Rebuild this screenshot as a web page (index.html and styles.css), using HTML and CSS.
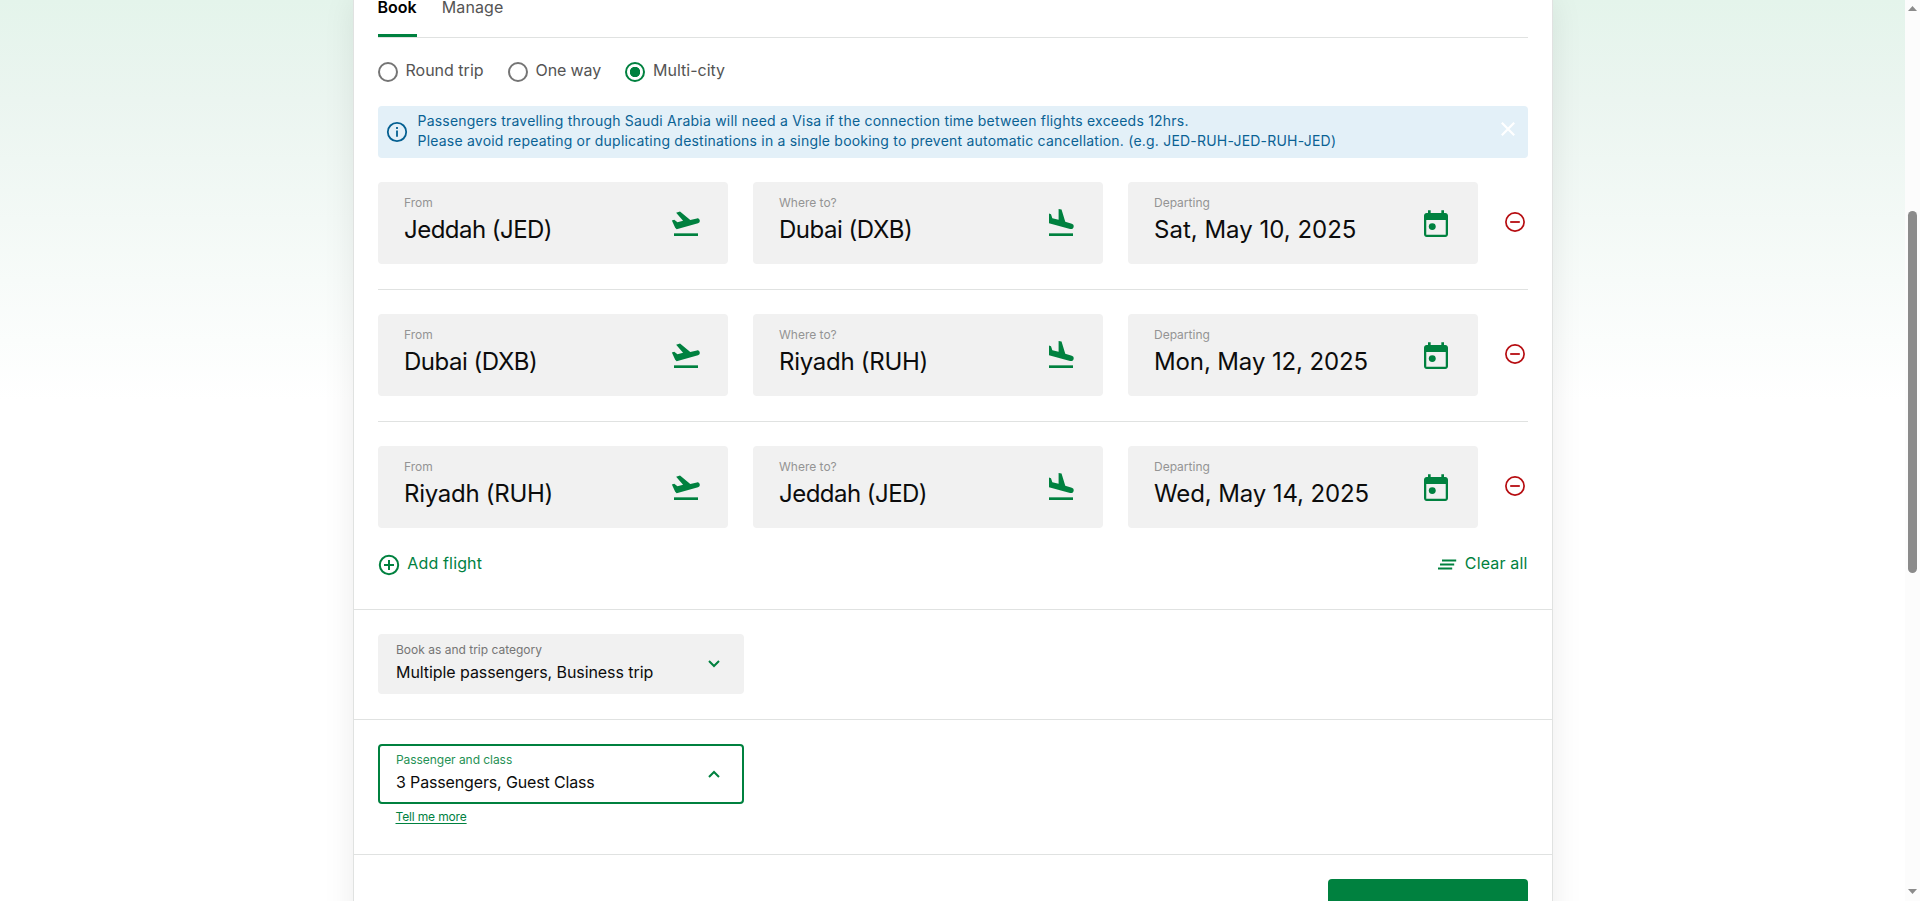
FILE: index.html
```html
<!DOCTYPE html>
<html lang="en">
<head>
<meta charset="utf-8">
<title>Book flights</title>
<link rel="stylesheet" href="styles.css">
</head>
<body>
<svg class="sprite" aria-hidden="true">
  <symbol id="takeoff" viewBox="0 0 24 24">
    <path d="M3 19h18v2H3z"/>
    <path d="M1.400 9.400 3.200 8.800 5.600 10.700 9.800 9.600 4.600 3.500 7.500 2.700 15.200 9 20.200 7.800C21.200 7.600 22.100 8.200 22.300 9.200S22 11.200 21 11.500L5 15.900 3.900 14.800z"/>
  </symbol>
  <symbol id="landing" viewBox="0 0 24 24">
    <path d="M3 19h18v2H3z"/>
    <path d="M18.800 15.700 3 11.500V4.200l1.500.4 1 3 4.700 1.300V.7l2.200.5 2.800 9.200 4.900 1.400c1 .3 1.600 1.200 1.400 2.200-.2 1.200-1.200 1.900-2.200 1.700z"/>
  </symbol>
  <symbol id="calendar" viewBox="0 0 24 24">
    <path d="M19 3h-1V1h-2v2H8V1H6v2H5c-1.100 0-2 .9-2 2v14c0 1.100.9 2 2 2h14c1.100 0 2-.9 2-2V5c0-1.100-.9-2-2-2zm.3 16.300H4.700V8.200h14.600z"/>
    <circle cx="9.200" cy="13.200" r="2.600"/>
  </symbol>
  <symbol id="minus" viewBox="0 0 20 20">
    <circle cx="10" cy="10" r="9.100" fill="none" stroke="currentColor" stroke-width="1.700"/>
    <path d="M5.200 9.100h9.600v1.800H5.200z"/>
  </symbol>
</svg>

<main class="page">
  <section class="card">
    <div class="block search">
      <nav class="tabs">
        <a class="tab active">Book</a>
        <a class="tab">Manage</a>
      </nav>

      <div class="trip-types">
        <label class="trip round"><span class="radio"></span>Round trip</label>
        <label class="trip one"><span class="radio"></span>One way</label>
        <label class="trip"><span class="radio checked"></span>Multi-city</label>
      </div>

      <div class="notice">
        <svg class="notice-icon" viewBox="0 0 22 22"><circle cx="11" cy="11" r="9.200" fill="none" stroke="currentColor" stroke-width="1.800"/><path d="M10.100 9.500h1.800v6.200h-1.800zM10.100 6h1.800v1.900h-1.800z" fill="currentColor"/></svg>
        <p class="notice-text">Passengers travelling through Saudi Arabia will need a Visa if the connection time between flights exceeds 12hrs.<br>Please avoid repeating or duplicating destinations in a single booking to prevent automatic cancellation. (e.g. JED-RUH-JED-RUH-JED)</p>
        <svg class="notice-close" viewBox="0 0 14 14"><path d="M.8.8l12.400 12.400M13.200.8.8 13.200" fill="none" stroke="currentColor" stroke-width="2.200"/></svg>
      </div>

      <div class="flight">
        <div class="field"><div><div class="label">From</div><div class="value jeddah">Jeddah (JED)</div></div><svg class="icon"><use href="#takeoff"/></svg></div>
        <div class="field"><div><div class="label">Where to?</div><div class="value dubai">Dubai (DXB)</div></div><svg class="icon"><use href="#landing"/></svg></div>
        <div class="field"><div><div class="label">Departing</div><div class="value">Sat, May 10, 2025</div></div><svg class="icon calendar"><use href="#calendar"/></svg></div>
        <svg class="remove"><use href="#minus"/></svg>
      </div>
      <div class="flight">
        <div class="field"><div><div class="label">From</div><div class="value dubai">Dubai (DXB)</div></div><svg class="icon"><use href="#takeoff"/></svg></div>
        <div class="field"><div><div class="label">Where to?</div><div class="value riyadh">Riyadh (RUH)</div></div><svg class="icon"><use href="#landing"/></svg></div>
        <div class="field"><div><div class="label">Departing</div><div class="value date">Mon, May 12, 2025</div></div><svg class="icon calendar"><use href="#calendar"/></svg></div>
        <svg class="remove"><use href="#minus"/></svg>
      </div>
      <div class="flight">
        <div class="field"><div><div class="label">From</div><div class="value riyadh">Riyadh (RUH)</div></div><svg class="icon"><use href="#takeoff"/></svg></div>
        <div class="field"><div><div class="label">Where to?</div><div class="value jeddah">Jeddah (JED)</div></div><svg class="icon"><use href="#landing"/></svg></div>
        <div class="field"><div><div class="label">Departing</div><div class="value date">Wed, May 14, 2025</div></div><svg class="icon calendar"><use href="#calendar"/></svg></div>
        <svg class="remove"><use href="#minus"/></svg>
      </div>

      <div class="actions">
        <a class="action"><svg class="add-icon" viewBox="0 0 22 22"><circle cx="11" cy="11" r="9.200"/><path d="M11 6v10M6 11h10"/></svg>Add flight</a>
        <a class="action"><svg class="clear-icon" viewBox="0 0 20 12"><path d="M5 1.500h14.200M3 5.500h14.200M1 9.500h14.200"/></svg>Clear all</a>
      </div>
    </div>

    <div class="block category">
      <div class="select">
        <div class="select-text"><div class="select-label">Book as and trip category</div><div class="select-value">Multiple passengers, Business trip</div></div>
        <svg class="chevron" viewBox="0 0 12 8"><path d="M1 1l5 5 5-5"/></svg>
      </div>
    </div>

    <div class="block passengers">
      <div class="select open">
        <div class="select-text"><div class="select-label">Passenger and class</div><div class="select-value guests">3 Passengers, Guest Class</div></div>
        <svg class="chevron" viewBox="0 0 12 8"><path d="M1 7l5-5 5 5"/></svg>
      </div>
      <a class="more">Tell me more</a>
    </div>

    <div class="block submit">
      <div class="button"></div>
    </div>
  </section>
</main>

<aside class="scrollbar">
  <svg class="arrow" viewBox="0 0 9 5"><path d="M0 5 4.500 0 9 5z"/></svg>
  <div class="thumb"></div>
  <svg class="arrow down" viewBox="0 0 9 5"><path d="M0 0h9L4.500 5z"/></svg>
</aside>
</body>
</html>
```

FILE: styles.css
```css
* { box-sizing: border-box; }

body {
  margin: 0;
  display: flex;
  height: 901px;
  overflow: hidden;
  font: 16px/20px Inter, "Liberation Sans", sans-serif;
  color: #545454;
  background: #fff;
}

.sprite { position: absolute; width: 0; height: 0; }

.page {
  flex: 1;
  height: 901px;
  overflow: hidden;
  background: linear-gradient(#e4f4eb 0, #ebf5f0 100px, #fff 400px);
}

.card {
  width: 1200px;
  height: 940px;
  margin: 0 auto;
  background: #fff;
  border: solid #e0e2e1;
  border-width: 0 1px;
  box-shadow: 0 0 30px rgba(0, 0, 0, .08);
}

.block { padding: 24px; border-bottom: 1px solid #e0e2e1; }
.search { height: 610px; padding-top: 0; }

.tabs {
  display: flex;
  gap: 25px;
  height: 38px;
  border-bottom: 1px solid #e0e2e1;
}
.tab { height: 37px; line-height: 15px; letter-spacing: .15px; }
.tab.active {
  color: #000;
  font-weight: 600;
  letter-spacing: 0;
  border-bottom: 3px solid #00813f;
}

.trip-types { display: flex; gap: 24px; margin-top: 24px; }
.trip { display: flex; gap: 8px; line-height: 17px; }
.one { letter-spacing: -.12px; }
.radio {
  width: 20px;
  height: 20px;
  border: 2px solid #757575;
  border-radius: 50%;
}
.radio.checked {
  border-color: #00813f;
  background: radial-gradient(circle, #00813f 0 4.900px, #fff 5.500px);
}

.notice {
  display: flex;
  height: 52px;
  margin-top: 24px;
  padding: 5px 13px 0 8px;
  border-radius: 4px;
  background: #e3f0f8;
  color: #0a6294;
}
.notice-icon { width: 22px; height: 22px; margin: 10px 10px 0 0; color: #045f91; }
.notice-text { flex: 1; margin: 0; font-size: 14px; letter-spacing: .212px; white-space: nowrap; }
.notice-close { width: 14px; height: 14px; margin-top: 11px; color: #fff; }

.flight {
  display: grid;
  grid-template-columns: repeat(3, 350px) 25px;
  column-gap: 25px;
  height: 132px;
  padding: 24px 0 25px;
  border-bottom: 1px solid #e0e2e1;
}
.flight:nth-of-type(5) { height: 131px; border: 0; }

.field {
  display: flex;
  justify-content: space-between;
  height: 82px;
  padding: 10px 26px 0;
  border-radius: 4px;
  background: #f1f1f1;
}
.label { padding-left: .5px; font-size: 12px; line-height: 22px; color: #949494; }
.value { padding: 1px 0 0 .5px; font-size: 24px; line-height: 30px; color: #0c0c0c; white-space: nowrap; }
.jeddah { letter-spacing: -.53px; }
.dubai { letter-spacing: -.48px; }
.riyadh { letter-spacing: -.28px; }
.date { letter-spacing: -.12px; }

.icon { width: 32px; height: 32px; margin-top: 16px; fill: #00813f; }
.icon.calendar { margin-top: 17px; }
.remove { width: 20px; height: 20px; margin: 30px 0 0 2.500px; color: #b60c10; fill: currentColor; overflow: visible; }

.actions { display: flex; justify-content: space-between; color: #00813f; }
.action { display: flex; align-items: flex-start; line-height: 20px; letter-spacing: .15px; }
.add-icon, .clear-icon { fill: none; stroke: #00813f; stroke-width: 2; }
.add-icon { width: 22px; height: 22px; margin: 1px 7px 0 .8px; }
.clear-icon { width: 20px; height: 12px; margin: 6px 8px 0 0; }

.category { height: 110px; }
.passengers { height: 135px; }

.select {
  display: flex;
  justify-content: space-between;
  align-items: center;
  width: 366px;
  height: 60px;
  padding: 0 24px 0 18.500px;
  border-radius: 4px;
  background: #f1f1f1;
}
.select.open { border: 2px solid #00813f; background: #fff; padding: 0 22px 0 16.500px; }
.select-text { padding-bottom: 3px; }
.select-label { font-size: 12px; line-height: 20px; color: #757575; }
.open .select-label { color: #1f9154; letter-spacing: -.05px; }
.select-value { line-height: 25px; color: #0c0c0c; letter-spacing: -.07px; }
.guests { letter-spacing: -.15px; }
.chevron { width: 12px; height: 8px; fill: none; stroke: #00813f; stroke-width: 2; }

.more {
  display: block;
  width: max-content;
  margin: 3px 0 0 18px;
  font-size: 12px;
  letter-spacing: -.15px;
  color: #00813f;
  text-decoration: underline;
  text-underline-offset: 2px;
}

.submit { display: flex; justify-content: flex-end; }
.button { width: 200px; height: 50px; border-radius: 4px; background: #00813f; }

.scrollbar {
  display: flex;
  flex-direction: column;
  align-items: center;
  width: 15px;
  height: 901px;
  padding: 6px 0 7px;
  background: #fcfcfc;
}
.arrow { width: 9px; height: 5px; fill: #8b8b8b; }
.thumb { width: 9px; height: 362px; margin-top: 200px; border-radius: 5px; background: #8b8b8b; }
.down { margin-top: auto; }
```
